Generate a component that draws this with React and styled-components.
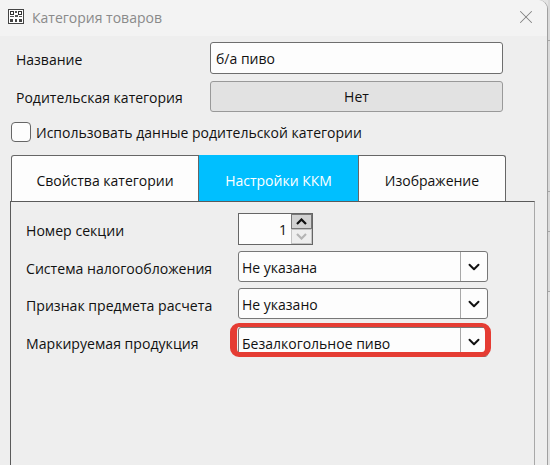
import React from "react";
import styled, { createGlobalStyle } from "styled-components";
import { X, ChevronDown } from "lucide-react";

const GlobalStyle = createGlobalStyle`
  html, body { margin: 0; padding: 0; }
  body {
    width: 550px;
    height: 465px;
    overflow: hidden;
    background: #e4e4e4;
    font-family: "Open Sans", "Noto Sans", sans-serif;
    color: #111111;
  }
`;

const Page = styled.div`
  width: 550px;
  height: 465px;
  display: flex;
  overflow: hidden;
`;

const Dialog = styled.div`
  width: 548px;
  height: 465px;
  box-sizing: border-box;
  background: #eeeeee;
  border-right: 1px solid #a0a0a0;
  border-top-right-radius: 9px;
  display: flex;
  flex-direction: column;
  flex-shrink: 0;
`;

const Backdrop = styled.div`
  flex: 1;
  display: flex;
  flex-direction: column;
`;

const BackdropBand = styled.div`
  height: ${({ $height }) => $height}px;
  box-sizing: border-box;
  border-bottom: 1px solid #a6a6a6;
  background: #d9d9d9;
`;

const TitleBar = styled.div`
  height: 36px;
  box-sizing: border-box;
  background: #f3f3f3;
  border-top-right-radius: 9px;
  display: flex;
  align-items: center;
  padding: 0 10px 2px 8px;
  flex-shrink: 0;
`;

const AppIcon = styled.svg`
  width: 16px;
  height: 16px;
  margin-right: 8px;
`;

const Caption = styled.div`
  flex: 1;
  font-size: 14px;
  color: #8a8a8a;
`;

const Body = styled.div`
  display: flex;
  flex-direction: column;
  flex: 1;
  padding: 6px 12px 0 10px;
`;

const FormRow = styled.div`
  display: flex;
  align-items: center;
  height: 32px;
  margin: 0 32px 6px 0;
  padding-left: 6px;
`;

const RowLabel = styled.div`
  width: 194px;
  padding-top: 2px;
  font-size: 14px;
  flex-shrink: 0;
`;

const TextInput = styled.div`
  flex: 1;
  height: 32px;
  box-sizing: border-box;
  background: #fdfdfd;
  border: 1px solid #6e6e6e;
  border-radius: 3px;
  display: flex;
  align-items: center;
  padding: 1px 0 0 5px;
  font-size: 14px;
`;

const ParentButton = styled.div`
  flex: 1;
  height: 31px;
  box-sizing: border-box;
  background: #e2e2e2;
  border: 1px solid #999999;
  border-radius: 3px;
  display: flex;
  align-items: center;
  justify-content: center;
  padding-top: 1px;
  font-size: 14px;
`;

const CheckRow = styled.div`
  display: flex;
  align-items: center;
  height: 28px;
  gap: 5px;
  font-size: 14px;
  padding-left: 1px;
`;

const CheckBox = styled.div`
  width: 20px;
  height: 20px;
  box-sizing: border-box;
  background: #fdfdfd;
  border: 1px solid #666666;
  border-radius: 4px;
`;

const Tabs = styled.div`
  display: flex;
  margin: 9px 0 0 1px;
  height: 46px;
  flex-shrink: 0;
`;

const Tab = styled.div`
  width: ${({ $width }) => $width}px;
  box-sizing: border-box;
  display: flex;
  align-items: center;
  justify-content: center;
  padding-top: 4px;
  font-size: 14px;
  background: ${({ $active }) => ($active ? "#00bfff" : "#fdfdfd")};
  color: ${({ $active }) => ($active ? "#ffffff" : "#111111")};
  border: ${({ $active }) => ($active ? "0" : "1px solid #666666")};
  border-bottom: 0;
  border-radius: ${({ $first, $last }) =>
    $first ? "3px 0 0 0" : $last ? "0 3px 0 0" : "0"};
`;

const Panel = styled.div`
  flex: 1;
  border-top: 1px solid #5a5a5a;
  border-left: 1px solid #5a5a5a;
  border-right: 1px solid #a8a8a8;
  padding: 11px 0 0 15px;
`;

const SettingRow = styled.div`
  display: flex;
  align-items: center;
  height: ${({ $height = 31 }) => $height}px;
  margin-bottom: ${({ $gap = 6 }) => $gap}px;
`;

const SettingLabel = styled.div`
  width: 212px;
  padding-top: 3px;
  font-size: 14.1px;
  flex-shrink: 0;
`;

const SpinBox = styled.div`
  width: 75px;
  height: 32px;
  box-sizing: border-box;
  border: 1px solid #666666;
  background: #fdfdfd;
  display: flex;
  justify-content: flex-end;
  align-items: center;
  font-size: 14px;
`;

const SpinValue = styled.span`
  margin-right: 4px;
  padding-top: 1px;
`;

const SpinButtons = styled.div`
  width: 21px;
  height: 100%;
  display: flex;
  flex-direction: column;
`;

const SpinButton = styled.div`
  flex: 1;
  display: flex;
  align-items: center;
  justify-content: center;
  box-sizing: border-box;
  background: ${({ $disabled }) => ($disabled ? "#eeeeee" : "#d2d2d2")};
  border: 1px solid ${({ $disabled }) => ($disabled ? "#c4c4c4" : "#777777")};
`;

const SpinArrow = styled.svg`
  width: 11px;
  height: 7px;
`;

const ComboWrap = styled.div`
  position: relative;
  width: 250px;
  height: 100%;
`;

const Combo = styled.div`
  height: 100%;
  box-sizing: border-box;
  background: #fdfdfd;
  border: 1px solid #777777;
  border-radius: 3px;
  display: flex;
  align-items: center;
  font-size: 14px;
`;

const ComboText = styled.div`
  flex: 1;
  padding: 2px 0 0 3px;
`;

const ComboArrow = styled.div`
  width: 26px;
  height: 100%;
  border-left: 1px solid #a8a8a8;
  display: flex;
  align-items: center;
  justify-content: center;
`;

const Highlight = styled.div`
  position: absolute;
  left: -8px;
  right: -3px;
  top: -4px;
  bottom: 0;
  border: 4px solid #e53c33;
  border-left-width: 7px;
  border-right-width: 6px;
  border-bottom-width: 5px;
  border-radius: 9px;
`;

const FieldCombo = ({ value, marked }) => (
  <ComboWrap>
    <Combo>
      <ComboText>{value}</ComboText>
      <ComboArrow>
        <ChevronDown size={18} strokeWidth={2.6} color="#111111" />
      </ComboArrow>
    </Combo>
    {marked && <Highlight />}
  </ComboWrap>
);

const QrIcon = () => (
  <AppIcon viewBox="0 0 16 16">
    <rect x="0.5" y="0.5" width="15" height="14" fill="#fff" stroke="#444" />
    <rect x="2.5" y="2.5" width="3" height="3" fill="none" stroke="#333" />
    <rect x="10.5" y="2.5" width="3" height="3" fill="none" stroke="#333" />
    <rect x="7" y="2" width="2" height="2" fill="#555" />
    <rect x="2" y="7" width="4" height="1" fill="#555" />
    <rect x="7" y="6" width="3" height="2" fill="#555" />
    <rect x="11" y="7" width="3" height="1" fill="#555" />
    <rect x="2" y="10" width="3" height="3" fill="#444" />
    <rect x="7" y="10" width="2" height="3" fill="#444" />
    <rect x="11" y="10" width="3" height="3" fill="#444" />
  </AppIcon>
);

const App = () => {
  return (
    <Page>
      <GlobalStyle />
      <Dialog>
        <TitleBar>
          <QrIcon />
          <Caption>Категория товаров</Caption>
          <X size={22} strokeWidth={1.1} color="#808080" />
        </TitleBar>
        <Body>
          <FormRow>
            <RowLabel>Название</RowLabel>
            <TextInput>б/а пиво</TextInput>
          </FormRow>
          <FormRow>
            <RowLabel>Родительская категория</RowLabel>
            <ParentButton>Нет</ParentButton>
          </FormRow>
          <CheckRow>
            <CheckBox />
            Использовать данные родительской категории
          </CheckRow>
          <Tabs>
            <Tab $width={188} $first>Свойства категории</Tab>
            <Tab $width={159} $active>Настройки ККМ</Tab>
            <Tab $width={148} $last>Изображение</Tab>
          </Tabs>
          <Panel>
            <SettingRow $height={32}>
              <SettingLabel>Номер секции</SettingLabel>
              <SpinBox>
                <SpinValue>1</SpinValue>
                <SpinButtons>
                  <SpinButton>
                    <SpinArrow viewBox="0 0 11 7">
                      <path d="M1 6 L5.5 1.5 L10 6" fill="none" stroke="#111" strokeWidth="2.2" />
                    </SpinArrow>
                  </SpinButton>
                  <SpinButton $disabled>
                    <SpinArrow viewBox="0 0 11 7">
                      <path d="M1 1 L5.5 5.5 L10 1" fill="none" stroke="#b4b4b4" strokeWidth="2.2" />
                    </SpinArrow>
                  </SpinButton>
                </SpinButtons>
              </SpinBox>
            </SettingRow>
            <SettingRow>
              <SettingLabel>Система налогообложения</SettingLabel>
              <FieldCombo value="Не указана" />
            </SettingRow>
            <SettingRow $gap={8}>
              <SettingLabel>Признак предмета расчета</SettingLabel>
              <FieldCombo value="Не указано" />
            </SettingRow>
            <SettingRow $height={30}>
              <SettingLabel>Маркируемая продукция</SettingLabel>
              <FieldCombo value="Безалкогольное пиво" marked />
            </SettingRow>
          </Panel>
        </Body>
      </Dialog>
      <Backdrop>
        <BackdropBand $height={41} />
        <BackdropBand $height={151} />
        <BackdropBand $height={40} />
        <BackdropBand $height={60} />
      </Backdrop>
    </Page>
  );
};

export default App;
